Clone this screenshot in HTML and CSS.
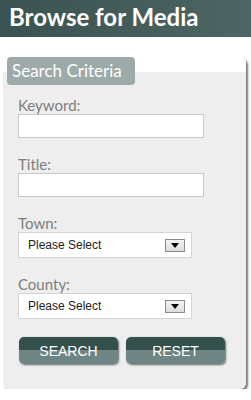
FILE: index.html
```html
<!DOCTYPE html>
<html lang="en">
<head>
    <meta charset="UTF-8">
    <title>Browse for Media</title>
    <link rel="stylesheet" href="styles.css">
</head>
<body>
    <div class="page-title">Browse for Media</div>
    <div class="criteria-panel">
        <div class="criteria-legend">Search Criteria</div>
        <form class="criteria-form">
            <label class="field-label">Keyword:</label>
            <input type="text" class="field-input">
            <label class="field-label">Title:</label>
            <input type="text" class="field-input">
            <label class="field-label">Town:</label>
            <div class="field-select">
                <span>Please Select</span>
                <span class="select-arrow"></span>
            </div>
            <label class="field-label">County:</label>
            <div class="field-select">
                <span>Please Select</span>
                <span class="select-arrow"></span>
            </div>
            <div class="button-row">
                <button type="button" class="form-button">SEARCH</button>
                <button type="reset" class="form-button">RESET</button>
            </div>
        </form>
    </div>
</body>
</html>
```

FILE: styles.css
```css
body {
    margin: 0;
    padding: 0;
    background: #fff;
    font-family: Lato, "Open Sans", sans-serif;
}
.page-title {
    height: 37px;
    padding-left: 9px;
    box-sizing: border-box;
    background: linear-gradient(to right, #3a5250, #4d6664);
    color: #fff;
    font-weight: 700;
    font-size: 24px;
    line-height: 34px;
}
.criteria-panel {
    margin: 20px 5px 0 3px;
    height: 332px;
    border-radius: 6px;
    background: linear-gradient(#fff 15px, #eeeeee 15px);
    box-shadow: 2px 2px 2px #7a7a7a;
}
.criteria-legend {
    margin: 1px 0 0 4px;
    width: 128px;
    height: 28px;
    box-sizing: border-box;
    padding-left: 5px;
    border-radius: 4px;
    background: #9eaaa9;
    color: #fff;
    font-size: 17px;
    line-height: 28px;
}
.criteria-form {
    display: flex;
    flex-direction: column;
    align-items: flex-start;
    padding: 12px 0 0 15px;
}
.field-label {
    height: 17px;
    color: #7d7d7d;
    font-size: 15px;
    line-height: 17px;
}
.field-input {
    width: 186px;
    height: 24px;
    box-sizing: border-box;
    margin: 0 0 18px 0;
    border: 1px solid #c8c8c8;
    background: #fff;
}
.field-select {
    display: flex;
    align-items: center;
    justify-content: space-between;
    width: 174px;
    height: 26px;
    box-sizing: border-box;
    margin-bottom: 18px;
    padding: 0 6px 0 9px;
    border: 1px solid #d4d4d4;
    background: #fff;
    color: #222;
    font-family: "Liberation Sans", Arial, sans-serif;
    font-size: 12px;
}
.select-arrow {
    position: relative;
    width: 20px;
    height: 13px;
    box-sizing: border-box;
    border: 1px solid #8a8a8a;
    background: linear-gradient(#f4f4f4, #dcdcdc);
}
.select-arrow::after {
    content: "";
    position: absolute;
    left: 5px;
    top: 3px;
    border-left: 4px solid transparent;
    border-right: 4px solid transparent;
    border-top: 5px solid #000;
}
.button-row {
    display: flex;
    gap: 8px;
    padding-left: 1px;
}
.form-button {
    width: 99px;
    height: 27px;
    padding: 0;
    border: none;
    border-radius: 5px;
    background: linear-gradient(#34504d 50%, #6f8583 50%);
    box-shadow: 1px 1px 2px #666;
    color: #fff;
    font-family: "Liberation Sans", Arial, sans-serif;
    font-size: 14px;
    cursor: pointer;
}
```
